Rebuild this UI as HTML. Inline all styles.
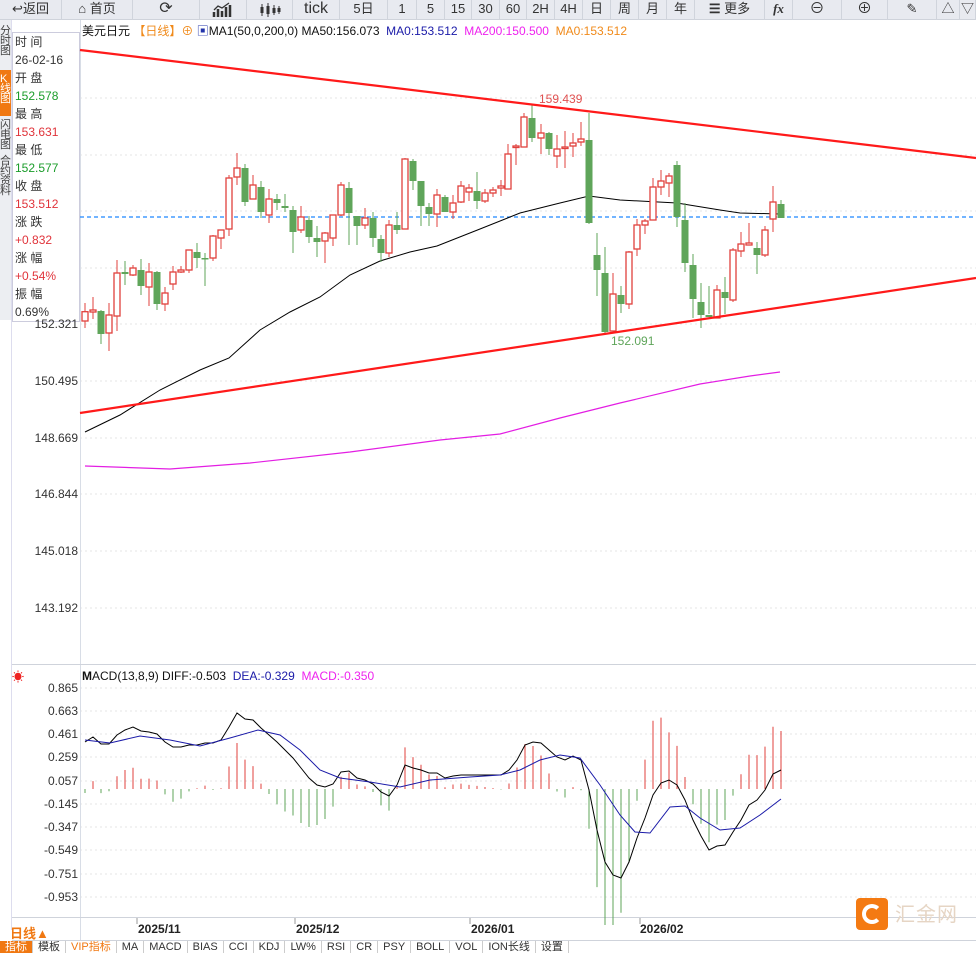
<!DOCTYPE html>
<html><head><meta charset="utf-8"><style>
*{margin:0;padding:0;box-sizing:border-box}
body{width:976px;height:953px;overflow:hidden;background:#fff;font-family:"Liberation Sans","Noto Sans CJK SC",sans-serif;position:relative}
#tb{position:absolute;left:0;top:0;width:976px;height:20px;background:#e8eaf0;border-bottom:1px solid #cfd3db}
#tb div{position:absolute;top:0;height:20px;border-right:1px solid #d0d4dc;font-size:13px;line-height:18px;text-align:center;color:#333}
.abs{position:absolute}
#side{position:absolute;left:0;top:20px;width:11px;height:300px;background:#eceef2;font-size:11px;line-height:10px;color:#444;overflow:hidden}
#info{position:absolute;left:12px;top:32px;width:68px;height:290px;border:1px solid #ccd;background:#fff;font-size:12px;line-height:18px;padding-left:2px;color:#333}
.g{color:#1a9c2a}.r{color:#e0333a}
.ax{position:absolute;font-size:12px;color:#333;width:78px;text-align:right}
#bt{position:absolute;left:0;top:941px;width:976px;height:12px;font-size:11px;line-height:13px;color:#333;overflow:hidden}
#bt span{display:inline-block;border-right:1px solid #ccc;padding:0 5px;height:12px;vertical-align:top}
</style></head><body>
<div id="tb">
<div style="left:0;width:62px">↩返回</div>
<div style="left:62px;width:71px">⌂ 首页</div>
<div style="left:133px;width:67px;font-size:16px">⟳</div>
<div style="left:200px;width:47px"><svg width="22" height="16" viewBox="0 0 22 16" style="margin-top:2px"><path d="M2 15V10M6 15V7M10 15V9M14 15V5M18 15V3" stroke="#333" stroke-width="2.5"/><path d="M2 8L6 4L10 6L17 1" stroke="#333" fill="none" stroke-width="1.3"/></svg></div>
<div style="left:247px;width:46px"><svg width="22" height="16" viewBox="0 0 22 16" style="margin-top:2px"><path d="M3 2V14M9 1V15M15 3V13M20 4V12" stroke="#333" stroke-width="1"/><rect x="1.5" y="5" width="3" height="6" fill="#333"/><rect x="7.5" y="4" width="3" height="8" fill="#333"/><rect x="13.5" y="6" width="3" height="5" fill="#333"/><rect x="18.5" y="6" width="3" height="4" fill="#333"/></svg></div>
<div style="left:293px;width:47px;font-size:16px">tick</div>
<div style="left:340px;width:48px">5日</div>
<div style="left:388px;width:29px">1</div>
<div style="left:417px;width:28px">5</div>
<div style="left:445px;width:27px">15</div>
<div style="left:472px;width:28px">30</div>
<div style="left:500px;width:27px">60</div>
<div style="left:527px;width:28px">2H</div>
<div style="left:555px;width:28px">4H</div>
<div style="left:583px;width:28px">日</div>
<div style="left:611px;width:28px">周</div>
<div style="left:639px;width:28px">月</div>
<div style="left:667px;width:28px">年</div>
<div style="left:695px;width:70px"><b>☰</b> 更多</div>
<div style="left:765px;width:28px;font-style:italic;font-weight:bold;font-family:'Liberation Serif',serif">fx</div>
<div style="left:793px;width:49px;font-size:15px">⊖</div>
<div style="left:842px;width:46px;font-size:15px">⊕</div>
<div style="left:888px;width:49px">✎</div>
<div style="left:937px;width:23px">△</div>
<div style="left:960px;width:16px">▽</div>
</div>
<div id="side"><div style="padding-top:6px">分时图</div><div style="background:#f07812;color:#fff;margin-top:14px;height:46px;padding-top:4px">K线图</div><div style="margin-top:4px">闪电图</div><div style="margin-top:6px">合约资料</div></div>
<div class="abs" style="left:11px;top:20px;width:1px;height:910px;background:#dde"></div>
<div id="info">时 间<br>26-02-16<br>开 盘<br><span class="g">152.578</span><br>最 高<br><span class="r">153.631</span><br>最 低<br><span class="g">152.577</span><br>收 盘<br><span class="r">153.512</span><br>涨 跌<br><span class="r">+0.832</span><br>涨 幅<br><span class="r">+0.54%</span><br>振 幅<br>0.69%</div>
<div class="abs" style="left:82px;top:22px;font-size:12px;white-space:nowrap;color:#111">美元日元 <span style="color:#f08a1a">【日线】⊕</span> <span style="color:#2233aa">▣</span>MA1(50,0,200,0) MA50:156.073 &nbsp;<span style="color:#1a1aa8">MA0:153.512</span> &nbsp;<span style="color:#ee22ee">MA200:150.500</span> &nbsp;<span style="color:#f08a1a">MA0:153.512</span></div>
<div class="ax" style="left:0;top:317px">152.321</div>
<div class="ax" style="left:0;top:374px">150.495</div>
<div class="ax" style="left:0;top:431px">148.669</div>
<div class="ax" style="left:0;top:487px">146.844</div>
<div class="ax" style="left:0;top:544px">145.018</div>
<div class="ax" style="left:0;top:601px">143.192</div>
<div class="abs" style="left:12px;top:668px;color:#e22;font-size:12px">☀</div>
<div class="abs" style="left:82px;top:669px;font-size:12px;white-space:nowrap;color:#111"><b>M</b>ACD(13,8,9) DIFF:-0.503 &nbsp;<span style="color:#1a1aa8">DEA:-0.329</span> &nbsp;<span style="color:#ee22ee">MACD:-0.350</span></div>
<div class="ax" style="left:0;top:681px">0.865</div>
<div class="ax" style="left:0;top:704px">0.663</div>
<div class="ax" style="left:0;top:727px">0.461</div>
<div class="ax" style="left:0;top:750px">0.259</div>
<div class="ax" style="left:0;top:774px">0.057</div>
<div class="ax" style="left:0;top:797px">-0.145</div>
<div class="ax" style="left:0;top:820px">-0.347</div>
<div class="ax" style="left:0;top:843px">-0.549</div>
<div class="ax" style="left:0;top:867px">-0.751</div>
<div class="ax" style="left:0;top:890px">-0.953</div>
<svg id="ch" class="abs" style="left:0;top:0" width="976" height="953"></svg>
<div class="abs" style="left:10px;top:923px;width:40px;font-size:13px;color:#f07812;font-weight:bold">日线▲</div>
<div class="abs" style="left:138px;top:922px;font-size:12px;font-weight:bold;color:#222">2025/11</div>
<div class="abs" style="left:296px;top:922px;font-size:12px;font-weight:bold;color:#222">2025/12</div>
<div class="abs" style="left:471px;top:922px;font-size:12px;font-weight:bold;color:#222">2026/01</div>
<div class="abs" style="left:640px;top:922px;font-size:12px;font-weight:bold;color:#222">2026/02</div>
<div class="abs" style="left:856px;top:898px;width:32px;height:32px;background:#f47a12;border-radius:4px"><div style="position:absolute;left:6px;top:6px;width:20px;height:20px;border:4px solid #fff;border-radius:50%;border-right-color:transparent"></div></div>
<div class="abs" style="left:895px;top:898px;font-size:20px;color:#e6d5c4;letter-spacing:1px">汇金网</div>
<div id="bt"><span style="background:#f07812;color:#fff">指标</span><span>模板</span><span style="color:#f07812">VIP指标</span><span>MA</span><span>MACD</span><span>BIAS</span><span>CCI</span><span>KDJ</span><span>LW%</span><span>RSI</span><span>CR</span><span>PSY</span><span>BOLL</span><span>VOL</span><span>ION长线</span><span>设置</span></div>
<script>
var s='';
function L(x1,y1,x2,y2,c,w,d){s+='<line x1="'+x1+'" y1="'+y1+'" x2="'+x2+'" y2="'+y2+'" stroke="'+c+'" stroke-width="'+w+'"'+(d?' stroke-dasharray="'+d+'"':'')+'/>';}
function P(a,c,w){s+='<polyline fill="none" stroke="'+c+'" stroke-width="'+w+'" points="'+a.map(function(p){return p.join(',')}).join(' ')+'"/>';}
[98,155,211,268,324,381,438,494,551,608].forEach(function(y){L(80,y,976,y,'#e4e4e4',1,'2,3')});
[688,711,734,757,781,804,827,850,874,897].forEach(function(y){L(80,y,976,y,'#e4e4e4',1,'2,3')});
L(80.5,20,80.5,940,'#d8dde6',1);
L(12,664.5,976,664.5,'#cfd3db',1);
L(12,917.5,976,917.5,'#cfd3db',1);
L(12,940.5,976,940.5,'#cfd3db',1);
[137,295,470,640].forEach(function(x){L(x,918,x,924,'#999',1)});
L(80,217,976,217,'#1e88ff',1.3,'4,3');
P([[85,432],[120,415],[160,390],[200,370],[229,358],[260,330],[290,312],[320,297],[350,275],[380,261],[410,252],[437,246],[480,229],[520,213],[560,203],[589,196],[620,200],[677,203],[720,210],[740,213],[780,214]],'#000',1);
P([[85,466],[170,469],[250,463],[350,452],[440,440],[500,434],[560,418],[620,403],[700,384],[750,376],[780,372]],'#e31ee3',1.2);
var C=[[85,303,328,311.7,321,1],[93,297,319,310,312,1],[101,310,344,311,334,0],[109,303,351,315,333,1],[117,260,331,273,316,1],[125,261,285,272,274,0],[133,265,276,268,275,1],[141,259,295,270,286,0],[149,263,306,272,287,1],[157,271,310,272,304,0],[165,287,311,293,304,1],[173,266,290,272,284,1],[181,266,273,270,272,1],[189,250,273,250,270,1],[197,243,268,252,258,0],[205,253,286,258,259,0],[213,235,261,236,258,1],[221,230,249,230,238,1],[229,175,236,178,229,1],[237,153,185,168,177,1],[245,164,206,168,202,0],[253,175,199,185,199,1],[261,181,218,187,212,0],[269,189,223,199,215,1],[277,194,210,199,203,0],[285,194,212,206,208,0],[293,206,253,210,232,0],[301,206,233,217,230,1],[309,216,243,220,237,0],[317,226,257,238,242,0],[325,232,263,233,241,1],[333,215,246,215,238,1],[341,182,216,185,215,1],[349,182,245,188,213,0],[357,216,245,216,226,0],[365,208,229,218,225,1],[373,212,247,218,238,0],[381,235,262,239,253,0],[389,220,257,225,253,1],[397,212,234,225,230,0],[405,158,229,159,229,1],[413,159,190,161,181,0],[421,181,226,181,206,0],[429,203,226,207,214,0],[437,189,227,195,214,1],[445,195,212,197,212,0],[453,195,219,203,212,1],[461,181,203,186,202,1],[469,184,201,188,192,1],[477,172,209,191,201,0],[485,189,203,193,201,1],[493,187,197,190,193,1],[501,180,196,186,188,1],[508,144,178,154,189,1],[516,144,165,146,147,1],[524,113,147,117,147,1],[532,105,142,118,138,0],[541,124,154,133,138,1],[549,132,155,133,149,0],[557,135,168,149,156,1],[565,131,168,147,148,1],[573,133,157,143,146,1],[581,122,146,139,142,1],[589,113,224,140,223,0],[597,233,296,255,270,0],[605,247,333,273,332,0],[613,273,331,294,331,1],[621,286,313,295,304,0],[629,251,309,252,304,1],[637,219,256,225,249,1],[645,219,234,221,225,1],[653,178,220,187,220,1],[661,170,195,181,187,1],[669,173,197,176,183,1],[677,161,227,165,217,0],[685,203,272,220,263,0],[693,254,318,265,299,0],[701,283,328,302,315,0],[709,286,314,315,317,0],[717,285,313,290,318,1],[725,277,314,292,298,0],[733,248,302,250,300,1],[741,232,257,244,251,1],[749,223,244,243,245,1],[757,242,274,248,255,0],[765,226,257,230,255,1],[773,186,232,202,219,1],[781,200,218,204,218,0]];
C.forEach(function(c){var col=c[5]?'#e0403c':'#5fa55a';var x=c[0];L(x,c[1],x,c[2],col,1);var h=Math.max(c[4]-c[3],1.5);
if(c[5])s+='<rect x="'+(x-3)+'" y="'+c[3]+'" width="6" height="'+h+'" fill="#fff" stroke="'+col+'" stroke-width="1.3"/>';else s+='<rect x="'+(x-3.5)+'" y="'+c[3]+'" width="7" height="'+h+'" fill="'+col+'"/>';});
L(80,50,976,158,'#ff1a1a',2.2);
L(80,413,976,278,'#ff1a1a',2.2);
s+='<text x="539" y="103" font-size="12" fill="#e05050" font-family="Liberation Sans">159.439</text>';
s+='<text x="611" y="345" font-size="12" fill="#5fa55a" font-family="Liberation Sans">152.091</text>';
var D=[[85,742],[93,737],[101,744],[109,744],[117,735],[125,730],[133,727],[141,731],[149,732],[157,734],[165,742],[173,747],[181,747],[189,745],[197,745],[205,743],[213,743],[221,740],[229,727],[237,713],[245,719],[253,720],[261,728],[269,735],[277,742],[285,750],[293,758],[301,768],[309,778],[317,785],[325,787],[333,784],[341,772],[349,771],[357,778],[365,780],[373,784],[381,792],[389,796],[397,785],[405,765],[413,768],[421,770],[429,773],[437,773],[445,778],[453,776],[461,775],[469,775],[477,775],[485,775],[493,775],[501,775],[509,770],[517,760],[525,745],[533,742],[541,743],[549,750],[557,757],[565,760],[573,756],[581,760],[589,790],[597,830],[605,862],[613,875],[621,878],[629,862],[637,838],[645,818],[653,795],[661,783],[669,780],[677,785],[685,800],[693,820],[701,836],[709,850],[717,846],[725,845],[733,832],[741,820],[749,805],[757,800],[765,790],[773,774],[781,770]];
var E=[[85,740],[110,743],[140,736],[170,740],[200,746],[230,738],[258,730],[280,735],[300,750],[320,770],[340,778],[370,782],[400,787],[430,780],[470,777],[500,775],[520,770],[540,760],[560,755],[580,758],[600,785],[620,815],[635,832],[650,833],[670,807],[685,806],[700,818],[720,830],[740,828],[760,815],[781,799]];
function ev(x){for(var i=0;i<E.length-1;i++){if(x>=E[i][0]&&x<=E[i+1][0]){var t=(x-E[i][0])/(E[i+1][0]-E[i][0]);return E[i][1]+t*(E[i+1][1]-E[i][1]);}}return E[E.length-1][1];}
var Z=789;
D.forEach(function(d){var v=2*(d[1]-ev(d[0]));var y=Z+v;L(d[0],Z,d[0],Math.max(650,Math.min(925,y)),v<0?'#e0403c':'#5fa55a',1);});
P(D,'#000',1);P(E,'#1a1aa8',1);
document.getElementById('ch').innerHTML=s;
</script>
</body></html>
